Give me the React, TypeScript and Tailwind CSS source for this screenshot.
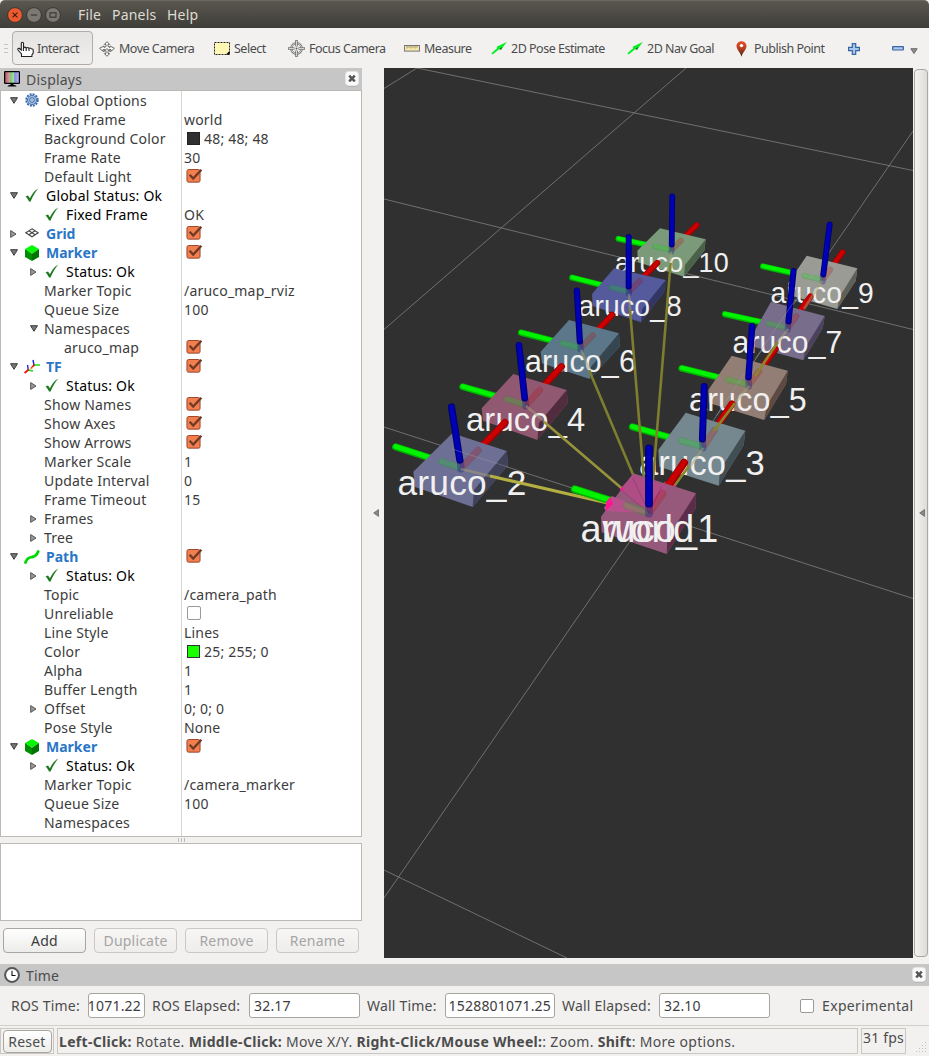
import React from "react";

type Pt = [number, number];

/* ---------- small icons ---------- */

const Check = () => (
  <svg width="15" height="15" viewBox="-1 0 15 15" className="block">
    <path d="M0.5 8.6 L3 7.4 L4.9 10.2 C7 6 9.5 2.8 13.2 0.6 C10 4.5 7.5 8.8 5.6 13.6 L4 13.6 C3 11.5 2 10 0.5 8.6Z" fill="#1e7a1e" />
  </svg>
);

const Gear = () => (
  <svg width="15" height="15" viewBox="-1 0 15 15" className="block">
    <circle cx="7" cy="7" r="5.7" fill="none" stroke="#3465a4" strokeWidth="2" strokeDasharray="1.9 1.08" />
    <circle cx="7" cy="7" r="4.6" fill="#9dbce0" stroke="#4a7ab8" strokeWidth="1" />
    <circle cx="7" cy="7" r="2.3" fill="#dbe7f4" stroke="#3465a4" strokeWidth="1" />
    <circle cx="7" cy="7" r="0.7" fill="#3465a4" />
  </svg>
);

const GridIcon = () => (
  <svg width="15" height="11" viewBox="-1 0 15 11" className="block" fill="none" stroke="#444" strokeWidth="1.1">
    <path d="M7 0.8 L13.2 4.8 L7 8.8 L0.8 4.8Z M3.9 2.8 L10.1 6.8 M10.1 2.8 L3.9 6.8" />
  </svg>
);

const Cube = () => (
  <svg width="16" height="16" viewBox="0 0 16 16" className="block">
    <path d="M8 0 L15 4 L8 8.8 L1 4Z" fill="#00fb00" />
    <path d="M1 4 L8 8.8 V16 L1 12Z" fill="#008e00" />
    <path d="M15 4 L8 8.8 V16 L15 12Z" fill="#007300" />
  </svg>
);

const TfIcon = () => (
  <svg width="17" height="15" viewBox="0 0 17 15" className="block" fill="none" strokeWidth="1.4">
    <path d="M10 6 L9 1 M4.2 11 L3.6 6" stroke="#2020e8" />
    <path d="M10 6 H16 M4.2 11 L9 12" stroke="#10e010" />
    <path d="M10.5 5.5 L7 9.5 M4.5 10.8 L0.6 14" stroke="#f01010" strokeWidth="1.8" />
    <path d="M9.3 8 L5 10.8" stroke="#e8b040" strokeWidth="1" />
  </svg>
);

const PathIcon = () => (
  <svg width="17" height="14" viewBox="0 0 17 14" className="block">
    <path d="M1.5 12.5 C3 8 5 7.6 8 7 C12 6.4 13 4.6 14.2 1.5" fill="none" stroke="#00d800" strokeWidth="2.8" strokeLinecap="round" />
  </svg>
);

const DownTri = () => (
  <svg width="8" height="7" viewBox="0 0 8 7" className="block">
    <path d="M0.5 0.7 H7.5 L4 6.3Z" fill="#777" stroke="#3c3c3c" strokeWidth="1" />
  </svg>
);

const MenuTri = () => (
  <svg width="8" height="7" viewBox="0 0 8 7" className="block">
    <path d="M0.8 0.7 H7.2 L4 5.6Z" fill="#8c8c8c" stroke="#6e6e6e" strokeWidth="1" />
  </svg>
);

const RightTri = () => (
  <svg width="7" height="8" viewBox="0 0 7 8" className="block">
    <path d="M0.7 0.6 V7.4 L6 4Z" fill="#999" stroke="#555" strokeWidth="1" />
  </svg>
);

const LeftTri = () => (
  <svg width="6" height="8" viewBox="0 0 6 8" className="block">
    <path d="M5.5 0.6 V7.4 L0.7 4Z" fill="#888" stroke="#666" strokeWidth="0.8" />
  </svg>
);

const Checked = () => (
  <svg width="17" height="16" viewBox="0 0 17 16" className="block">
    <rect x="0.5" y="1.5" width="14" height="13.6" rx="2" fill="#d9d4cf" />
    <rect x="1" y="1.5" width="13" height="12.6" rx="1.8" fill="#f37f4f" stroke="#a2492b" />
    <path d="M3.6 6.8 L7.2 10.6 L15.4 1.8" fill="none" stroke="#6e3a26" strokeWidth="2.3" />
  </svg>
);

const CloseBox = () => (
  <svg width="14" height="16" viewBox="0 0 14 16" className="block">
    <rect x="0.5" y="1" width="13" height="14.5" rx="3" fill="#aaa" />
    <rect x="0.5" y="0.5" width="13" height="14" rx="3" fill="#fafafa" stroke="#e4e4e4" />
    <path d="M4.2 4.7 L9.8 10.3 M9.8 4.7 L4.2 10.3" stroke="#555" strokeWidth="2.5" />
  </svg>
);

const Monitor = () => (
  <svg width="16" height="16" viewBox="0 0 16 16" className="block">
    <defs>
      <linearGradient id="scr" x1="0" x2="1" y1="0" y2="0">
        <stop offset="0" stopColor="#a85060" />
        <stop offset="0.33" stopColor="#dba0a0" />
        <stop offset="0.34" stopColor="#6fc070" />
        <stop offset="0.66" stopColor="#a8e8a8" />
        <stop offset="0.67" stopColor="#8888d8" />
        <stop offset="1" stopColor="#b8b8f8" />
      </linearGradient>
    </defs>
    <rect x="0.6" y="0.6" width="14.8" height="11.8" rx="0.6" fill="url(#scr)" stroke="#000" strokeWidth="1.2" />
    <path d="M6.5 12.5 H9.5 V14 H6.5Z" fill="#000" />
    <path d="M3.5 15.6 Q3.5 14 6 14 H10 Q12.5 14 12.5 15.6Z" fill="#000" />
  </svg>
);

const Clock = () => (
  <svg width="16" height="16" viewBox="0 0 16 16" className="block">
    <circle cx="8" cy="8" r="6.9" fill="#fff" stroke="#555" strokeWidth="2" />
    <path d="M8 3.8 V8.5 H11.6" fill="none" stroke="#111" strokeWidth="1.1" />
  </svg>
);

const Hand = () => (
  <svg width="17" height="17" viewBox="0 0 17 17" className="block" stroke="#222" strokeWidth="1.1">
    <path
      d="M4.5 15.5 V13 L1 9 Q0.3 7.6 2 7.2 L4.3 9 V2 Q5.4 0.4 6.5 2 V7 Q7.6 5.2 9.2 7 Q10.4 5.8 12 7.4 Q13.2 6.4 14.6 8 Q16.2 7.6 16.2 9.5 V12 L14.9 14 V15.5Z"
      fill="#fff"
    />
    <path d="M6.5 7 V10 M9.2 7 V10 M12 7.4 V10" fill="none" />
  </svg>
);

const MoveIcon = () => (
  <svg width="16" height="16" viewBox="0 0 16 16" className="block" fill="#fff" stroke="#666" strokeWidth="1">
    <path d="M8 0.7 L10.6 3.4 H9 V5.5 L11 6.5 V5 L15.4 7.3 L12.5 10 L12.2 8.8 L10.4 8.4 L9 9.6 V12.6 H10.6 L8 15.3 L5.4 12.6 H7 V9.6 L5.6 8.4 L3.8 8.8 L3.5 10 L0.6 7.3 L5 5 V6.5 L7 5.5 V3.4 H5.4Z" />
    <path d="M5.6 8.4 L4.5 11 L8 7.5 L11.5 11 L10.4 8.4" fill="none" />
  </svg>
);

const SelectIcon = () => (
  <svg width="16" height="13" viewBox="0 0 16 13" className="block">
    <rect x="0.5" y="0.5" width="15" height="12" fill="#fff7b4" stroke="#222" strokeDasharray="2 1" />
    <path d="M15.5 9 V12.5 H12Z" fill="#000" />
  </svg>
);

const FocusIcon = () => (
  <svg width="17" height="17" viewBox="0 0 17 17" className="block" fill="none" stroke="#777">
    <circle cx="8.5" cy="8.5" r="5.2" strokeWidth="2.4" />
    <circle cx="8.5" cy="8.5" r="5.2" stroke="#eee" strokeWidth="0.8" />
    <path d="M8.5 0 V6.5 M8.5 10.5 V17 M0 8.5 H6.5 M10.5 8.5 H17" strokeWidth="2.6" />
    <path d="M8.5 0.8 V6 M8.5 11 V16.2 M0.8 8.5 H6 M11 8.5 H16.2" stroke="#eee" strokeWidth="0.8" />
    <circle cx="8.5" cy="8.5" r="1" fill="#555" stroke="none" />
  </svg>
);

const Ruler = () => (
  <svg width="16" height="7" viewBox="0 0 16 7" className="block">
    <rect x="0.5" y="0.5" width="15" height="5.6" fill="#f5e9b0" stroke="#777" />
    <path d="M3 1 V3.5 M5 1 V2.8 M7 1 V3.5 M9 1 V2.8 M11 1 V3.5 M13 1 V2.8" stroke="#8a7a50" strokeWidth="0.8" />
  </svg>
);

const GreenArrow = () => (
  <svg width="16" height="13" viewBox="0 0 16 13" className="block">
    <path d="M0.4 11.2 L6.4 6 L5.6 4.8 L15.8 0 L10 7.8 L8.8 6.8 L1.6 12.4Z" fill="#00f020" />
    <path d="M8 6.9 L10 7.8 L11.5 5Z" fill="#086010" />
  </svg>
);

const Pin = () => (
  <svg width="11" height="16" viewBox="0 0 11 16" className="block">
    <defs>
      <linearGradient id="pin" x1="0" x2="0" y1="0" y2="1">
        <stop offset="0" stopColor="#e8502e" />
        <stop offset="0.5" stopColor="#b04020" />
        <stop offset="1" stopColor="#3a2010" />
      </linearGradient>
    </defs>
    <path d="M5.5 0.2 C8.6 0.2 10.5 2.4 10.5 5 C10.5 8.6 6.8 11 5.5 15.8 C4.2 11 0.5 8.6 0.5 5 C0.5 2.4 2.4 0.2 5.5 0.2Z" fill="url(#pin)" />
    <circle cx="5.5" cy="4.6" r="1.7" fill="#fff" />
  </svg>
);

const Plus = () => (
  <svg width="12" height="12" viewBox="0 0 12 12" className="block">
    <path d="M4.3 0.6 H7.7 V4.3 H11.4 V7.7 H7.7 V11.4 H4.3 V7.7 H0.6 V4.3 H4.3Z" fill="#a9c8ea" stroke="#3465a4" strokeWidth="1.2" />
  </svg>
);

const Minus = () => (
  <svg width="12" height="5" viewBox="0 0 12 5" className="block">
    <rect x="0.6" y="0.6" width="10.8" height="3.4" rx="0.5" fill="#a9c8ea" stroke="#3465a4" strokeWidth="1.2" />
  </svg>
);

/* ---------- property tree ---------- */

type Row = {
  l: 0 | 1 | 2;
  t: string;
  e?: "open" | "closed";
  i?: React.ReactNode;
  k?: "blue" | "black";
  v?: string;
  sw?: "dark" | "green";
  c?: boolean;
};

const status: Row = { l: 1, t: "Status: Ok", e: "closed", i: <Check />, k: "black" };

const rows: Row[] = [
  { l: 0, t: "Global Options", e: "open", i: <Gear /> },
  { l: 1, t: "Fixed Frame", v: "world" },
  { l: 1, t: "Background Color", v: "48; 48; 48", sw: "dark" },
  { l: 1, t: "Frame Rate", v: "30" },
  { l: 1, t: "Default Light", c: true },
  { l: 0, t: "Global Status: Ok", e: "open", i: <Check />, k: "black" },
  { l: 1, t: "Fixed Frame", i: <Check />, k: "black", v: "OK" },
  { l: 0, t: "Grid", e: "closed", i: <GridIcon />, k: "blue", c: true },
  { l: 0, t: "Marker", e: "open", i: <Cube />, k: "blue", c: true },
  status,
  { l: 1, t: "Marker Topic", v: "/aruco_map_rviz" },
  { l: 1, t: "Queue Size", v: "100" },
  { l: 1, t: "Namespaces", e: "open" },
  { l: 2, t: "aruco_map", c: true },
  { l: 0, t: "TF", e: "open", i: <TfIcon />, k: "blue", c: true },
  status,
  { l: 1, t: "Show Names", c: true },
  { l: 1, t: "Show Axes", c: true },
  { l: 1, t: "Show Arrows", c: true },
  { l: 1, t: "Marker Scale", v: "1" },
  { l: 1, t: "Update Interval", v: "0" },
  { l: 1, t: "Frame Timeout", v: "15" },
  { l: 1, t: "Frames", e: "closed" },
  { l: 1, t: "Tree", e: "closed" },
  { l: 0, t: "Path", e: "open", i: <PathIcon />, k: "blue", c: true },
  status,
  { l: 1, t: "Topic", v: "/camera_path" },
  { l: 1, t: "Unreliable", c: false },
  { l: 1, t: "Line Style", v: "Lines" },
  { l: 1, t: "Color", v: "25; 255; 0", sw: "green" },
  { l: 1, t: "Alpha", v: "1" },
  { l: 1, t: "Buffer Length", v: "1" },
  { l: 1, t: "Offset", e: "closed", v: "0; 0; 0" },
  { l: 1, t: "Pose Style", v: "None" },
  { l: 0, t: "Marker", e: "open", i: <Cube />, k: "blue", c: true },
  status,
  { l: 1, t: "Marker Topic", v: "/camera_marker" },
  { l: 1, t: "Queue Size", v: "100" },
  { l: 1, t: "Namespaces" },
];

const indent = ["pl-[4px]", "pl-[24px]", "pl-[44px]"];

function TreeRow({ r }: { r: Row }) {
  const tone =
    r.k === "blue"
      ? "font-bold text-[#2a76c6] tracking-[0px]"
      : r.k === "black"
        ? "text-black"
        : "text-[#3c3c3c]";
  return (
    <div className="flex h-[19px] shrink-0 items-center">
      <div className={`flex h-full w-[180px] shrink-0 items-center ${indent[r.l]}`}>
        <div className="mr-[3px] flex w-4 shrink-0 justify-center pl-[1px]">
          {r.e === "open" && <DownTri />}
          {r.e === "closed" && <RightTri />}
        </div>
        {r.i && <div className="flex w-[22px] shrink-0 items-center">{r.i}</div>}
        <span className={`whitespace-nowrap leading-[19px] ${tone}`}>{r.t}</span>
      </div>
      <div className="flex h-full flex-1 items-center pl-[3px] text-[#3c3c3c]">
        {r.sw && (
          <span
            className={`ml-[3px] mr-[4px] h-[13px] w-[13px] border ${
              r.sw === "dark" ? "border-[#222] bg-[#303030]" : "border-[#333] bg-[#19ff00]"
            }`}
          />
        )}
        {r.c === true && (
          <span className="mb-[2px] ml-[2px]">
            <Checked />
          </span>
        )}
        {r.c === false && (
          <span className="mb-[2px] ml-[3px] h-[14px] w-[14px] rounded-[2px] border border-[#999] bg-white" />
        )}
        {r.v && <span className="whitespace-nowrap leading-[19px]">{r.v}</span>}
      </div>
    </div>
  );
}

/* ---------- 3D scene ---------- */

type Frame = {
  name: string;
  top: [Pt, Pt, Pt, Pt];
  low: [Pt, Pt, Pt];
  fill: string;
  side: string;
  o: Pt;
  g: Pt;
  r: Pt;
  b: [Pt, Pt];
  w: number;
  label: [number, number, number, number];
};

/* top: back, right, front, left corners; low: left, front, right lower corners */
const frames: Frame[] = [
  { name: "aruco_10", top: [[660, 228.3], [705.7, 239.3], [685, 265], [637.3, 250.7]], low: [[638, 262.3], [684, 276.7], [704.3, 250.7]], fill: "#7a9a7a", side: "#4b6149", o: [671.3, 250], g: [616, 238.3], r: [698.5, 223.5], b: [[672.3, 194], [671.7, 247]], w: 5.8, label: [615, 272, 114, 28] },
  { name: "aruco_9", top: [[806.7, 255.7], [857.3, 268.3], [839.3, 297.3], [788.3, 283]], low: [[789, 295], [837.3, 309], [855.7, 280.7]], fill: "#999b94", side: "#5f605a", o: [822.7, 280], g: [760.5, 265.8], r: [844, 250.3], b: [[830, 222], [823, 277]], w: 6, label: [770.5, 303.3, 103.5, 28.8] },
  { name: "aruco_8", top: [[614, 268.3], [665.7, 280], [642.3, 309], [592, 294]], low: [[592.7, 306], [641, 322.3], [664, 292]], fill: "#545a9b", side: "#313665", o: [629, 292], g: [569.7, 277], r: [659, 261], b: [[628.7, 234.5], [628.7, 289]], w: 6, label: [578.5, 315.7, 103.5, 29] },
  { name: "aruco_7", top: [[771, 301.7], [824.7, 316], [805.7, 346.7], [752.3, 335]], low: [[753.3, 346.7], [803.3, 360.3], [822.7, 328.3]], fill: "#796d8c", side: "#4b425b", o: [787.7, 328], g: [722.4, 313.6], r: [812, 294.5], b: [[793.7, 268.5], [788.3, 324]], w: 6.2, label: [732.5, 353.3, 110, 31] },
  { name: "aruco_6", top: [[569, 320], [619, 333.3], [591, 366.7], [540.7, 351.7]], low: [[542, 363.3], [589.7, 379], [619.7, 346.7]], fill: "#5c7789", side: "#364650", o: [580.7, 348], g: [518.5, 332], r: [614, 313], b: [[576.7, 288], [580, 344]], w: 6.3, label: [525, 371.7, 111, 31] },
  { name: "aruco_5", top: [[731.7, 355.7], [787.7, 370.7], [766.7, 405.7], [708.3, 390]], low: [[709, 403], [764.3, 420], [786, 384]], fill: "#927e74", side: "#5c4a43", o: [749, 385], g: [679, 367.6], r: [777, 347], b: [[752.3, 323.5], [748.3, 380]], w: 6.5, label: [689, 410.7, 118, 33] },
  { name: "aruco_4", top: [[513.3, 374], [566.7, 390], [539, 423], [481.7, 408.3]], low: [[483, 420.7], [537.3, 440], [567.7, 403]], fill: "#915872", side: "#512c3e", o: [526, 405], g: [460, 386], r: [563.5, 364.5], b: [[518.7, 342.5], [525, 401]], w: 6.8, label: [466, 431, 119.5, 33.5] },
  { name: "aruco_3", top: [[685.7, 412.7], [745.3, 430.7], [720, 470], [658.3, 450]], low: [[659.3, 466.7], [718.7, 485.7], [743.7, 445]], fill: "#75888f", side: "#414e54", o: [703.3, 447], g: [629.5, 426], r: [733.5, 401.5], b: [[704.3, 383.5], [702.3, 442]], w: 7, label: [639, 474.5, 126, 35] },
  { name: "aruco_2", top: [[452.3, 433.3], [506.7, 451], [474, 490], [413.3, 471.7]], low: [[415, 487], [472.7, 507], [508, 465]], fill: "#6d6f94", side: "#3f4258", o: [461, 468], g: [392.8, 446], r: [507, 420.5], b: [[451, 404], [460.3, 463]], w: 7.2, label: [397.5, 495.3, 129, 35.5] },
  { name: "aruco_1", top: [[633.3, 473.3], [696, 493.3], [667.3, 538.3], [601, 516.7]], low: [[601.7, 532.3], [666.7, 554], [695.7, 508.3]], fill: "#96597c", side: "#5b2d48", o: [649, 513], g: [571.5, 488.2], r: [686, 460], b: [[649, 445], [649, 507]], w: 7.8, label: [580.5, 541.7, 138, 38.5] },
];

const pts = (a: Pt[]) => a.map((p) => p.join(",")).join(" ");

/* A capped rod that starts at a and ends at b, both ends included in its length. */
function Rod({ a, b, w, c, o = 1 }: { a: Pt; b: Pt; w: number; c: "r" | "g" | "b"; o?: number }) {
  const base = c === "r" ? "#a00000" : c === "g" ? "#00b400" : "#000078";
  const lit = c === "r" ? "#cc0000" : c === "g" ? "#00f400" : "#0000b6";
  const len = Math.hypot(b[0] - a[0], b[1] - a[1]) || 1;
  const k = Math.min(w * 0.42, len / 2) / len;
  const x1 = a[0] + (b[0] - a[0]) * k;
  const y1 = a[1] + (b[1] - a[1]) * k;
  const x2 = b[0] - (b[0] - a[0]) * k;
  const y2 = b[1] - (b[1] - a[1]) * k;
  return (
    <g opacity={o} strokeLinecap="round">
      <line x1={x1} y1={y1} x2={x2} y2={y2} stroke={base} strokeWidth={w} />
      <line x1={x1} y1={y1 - 0.4} x2={x2} y2={y2 - 0.4} stroke={lit} strokeWidth={w * 0.66} />
    </g>
  );
}

function Links() {
  return (
    <g fill="none" strokeWidth="2.6">
      <g stroke="#a5a070" opacity="0.5">
        <path d="M461 469 L490 476 M526 406 L544 421 M581 350 L589 369 M629 294 L630 310 M671 252 L670 264" />
        <path d="M822 281 L804 309 M788 329 L778 342 M749 386 L736 402 M703 448 L689 468" />
      </g>
      <path d="M490 476 L612 504" stroke="#b3af42" strokeWidth="3" />
      <path d="M544 421.7 L626 492" stroke="#96933a" />
      <path d="M589 370 L637 484" stroke="#7f7d2e" />
      <path d="M630 309 L644 480" stroke="#7f7d2e" />
      <path d="M670.6 263 L653 480" stroke="#7f7d2e" />
      <path d="M778 342 L755 376 M735 403 L714 431 M689 466 L672 489" stroke="#8a862e" />
    </g>
  );
}

function FrameMark({ f }: { f: Frame }) {
  const [back, right, front, left] = f.top;
  const [ll, lf, lr] = f.low;
  const last = f.name === "aruco_1";
  return (
    <g>
      <Rod a={f.g} b={f.o} w={f.w} c="g" />
      {last && <polygon points="664,482 674,481 675,487 667,492" fill="#ff1493" />}
      <Rod a={f.r} b={f.o} w={f.w} c="r" />
      <polygon points={pts([back, right, lr, lf, ll, left])} fill={f.fill} />
      <polygon points={pts([right, front, lf, lr])} fill={f.side} />
      {last && (
        <g>
          <polygon points="612,496 649,513 606,511 604,508" fill="#bb4f8e" />
          <polygon points="633,475 620,489 649,513 668,486" fill="#b04d86" />
          <path d="M620 489 L649 513 M633 478 L649 513 M662 486 L649 513" stroke="#8d4573" strokeWidth="1" fill="none" />
          <polygon points="610,497 606,502 606,511 613,504" fill="#ff1493" />
          <polygon points="622,486 620,491 624,490" fill="#ff1493" />
        </g>
      )}
      <Rod a={[(f.g[0] + f.o[0] * 2) / 3, (f.g[1] + f.o[1] * 2) / 3]} b={f.o} w={f.w} c="g" o={0.22} />
      <Rod a={[(f.r[0] + f.o[0] * 1.4) / 2.4, (f.r[1] + f.o[1] * 1.4) / 2.4]} b={f.o} w={f.w} c="r" o={0.22} />
      <Rod a={[f.b[1][0], f.b[1][1] - 4]} b={[f.o[0], f.o[1] + 4]} w={f.w} c="b" o={0.28} />
    </g>
  );
}

function Label({ f }: { f: Frame }) {
  const [x, y, w, s] = f.label;
  return (
    <text x={x} y={y} fontSize={s} textLength={w} lengthAdjust="spacingAndGlyphs" fill="#f0f0f0">
      {f.name}
    </text>
  );
}

function Scene() {
  const rear = frames.slice(0, 9);
  const first = frames[9];
  return (
    <svg width="529" height="890" viewBox="384 68 529 890" className="block bg-[#303030] font-['Liberation_Sans',sans-serif]">
      <g stroke="#808080" strokeWidth="0.8">
        <line x1="384" y1="88.5" x2="417" y2="68" />
        <line x1="417" y1="68" x2="913" y2="170.5" />
        <line x1="686" y1="68" x2="384" y2="329.5" />
        <line x1="384" y1="199" x2="913" y2="329.5" />
        <line x1="913" y1="131" x2="384" y2="898" />
        <line x1="384" y1="427" x2="913" y2="598.5" />
        <line x1="384" y1="870" x2="567" y2="958" />
      </g>
      {rear.map((f) => (
        <g key={f.name}>
          <FrameMark f={f} />
          <Label f={f} />
          <Rod a={f.b[0]} b={f.b[1]} w={f.w} c="b" />
        </g>
      ))}
      <Links />
      <g stroke="#a8a8a8" strokeWidth="0.6" opacity="0.6">
        <path d="M452 449 L508 467 M815 271 L755 359 M745 373 L716 416" />
      </g>
      <FrameMark f={first} />
      <Label f={first} />
      <text x="602.5" y="541.7" fontSize="38.5" textLength="92" lengthAdjust="spacingAndGlyphs" fill="#f0f0f0">
        world
      </text>
      <Rod a={first.b[0]} b={first.b[1]} w={first.w} c="b" />
    </svg>
  );
}

/* ---------- chrome ---------- */

function Tool({ icon, label, w, gap }: { icon: React.ReactNode; label?: string; w: string; gap?: string }) {
  return (
    <div className={`flex h-full shrink-0 items-center pt-[1px] ${w}`}>
      <span className={`shrink-0 ${gap ?? "w-[20px]"}`}>{icon}</span>
      {label && <span className="whitespace-nowrap pt-[1px]">{label}</span>}
    </div>
  );
}

function Field({ value, w, right }: { value: string; w: string; right?: boolean }) {
  return (
    <div
      className={`flex h-[25px] shrink-0 items-center overflow-hidden rounded-[3px] border border-[#a8a49e] bg-white ${w} ${
        right ? "justify-end pr-[3px]" : "pl-[4px]"
      }`}
    >
      <span className="whitespace-nowrap text-[#3c3c3c]">{value}</span>
    </div>
  );
}

function PushButton({ label, on }: { label: string; on?: boolean }) {
  return (
    <div
      className={`flex h-[25px] w-[83px] items-center justify-center rounded-[4px] border bg-linear-to-b ${
        on
          ? "border-[#a9a5a0] from-white to-[#ececea] text-[#3c3c3c]"
          : "border-[#cbc8c4] from-[#f7f6f5] to-[#eeedeb] text-[#a5a5a5]"
      }`}
    >
      {label}
    </div>
  );
}

const WinButton = ({ red, children }: { red?: boolean; children: React.ReactNode }) => (
  <svg width="16" height="16" viewBox="0 0 16 16" className="block">
    <circle cx="8" cy="8" r="7.4" fill={red ? "#ec5b30" : "#7b7971"} stroke="#35332d" strokeWidth="0.9" />
    <g fill="none" stroke={red ? "#4a1c0c" : "#3a3933"} strokeWidth="1.2">
      {children}
    </g>
  </svg>
);

export default function App() {
  return (
    <div className="flex h-[1056px] w-[929px] flex-col overflow-hidden bg-[#f2f1f0] font-['Noto_Sans',sans-serif] text-[14px] tracking-[0.2px] text-[#4c4c4c]">
      <header className="flex h-[28px] shrink-0 items-center rounded-t-[5px] border-t border-[#6b685f] bg-linear-to-b from-[#5a5750] to-[#3e3d38] pl-[7px] text-[#dfdbd2]">
        <div className="flex gap-[3px]">
          <WinButton red>
            <path d="M5.6 5.6 L10.4 10.4 M10.4 5.6 L5.6 10.4" />
          </WinButton>
          <WinButton>
            <path d="M4.8 8 H11.2" />
          </WinButton>
          <WinButton>
            <rect x="5" y="5.8" width="6" height="4.4" />
          </WinButton>
        </div>
        <span className="ml-[17px] w-[34px]">File</span>
        <span className="w-[55px]">Panels</span>
        <span>Help</span>
      </header>

      <div className="flex h-[40px] shrink-0 items-center text-[12.5px] tracking-[-0.5px]">
        <div className="ml-[4px] flex w-[8px] shrink-0 flex-col gap-[3px]">
          <span className="h-px w-[4px] bg-[#c8c5c1]" />
          <span className="h-px w-[4px] bg-[#c8c5c1]" />
          <span className="h-px w-[4px] bg-[#c8c5c1]" />
        </div>
        <div className="mr-[6px] flex h-[34px] w-[81px] shrink-0 items-center rounded-[4px] border border-[#b0aca7] bg-linear-to-b from-[#e4e3e1] to-[#f0efed] pl-[4px] pt-[2px]">
          <span className="w-[20px] shrink-0">
            <Hand />
          </span>
          <span className="pt-[1px]">Interact</span>
        </div>
        <Tool icon={<MoveIcon />} label="Move Camera" w="w-[115px]" />
        <Tool icon={<SelectIcon />} label="Select" w="w-[74px]" />
        <Tool icon={<FocusIcon />} label="Focus Camera" w="w-[116px]" gap="w-[21px]" />
        <Tool icon={<Ruler />} label="Measure" w="w-[87px]" />
        <Tool icon={<GreenArrow />} label="2D Pose Estimate" w="w-[136px]" />
        <Tool icon={<GreenArrow />} label="2D Nav Goal" w="w-[109px]" />
        <Tool icon={<Pin />} label="Publish Point" w="w-[112px]" gap="w-[18px]" />
        <Tool icon={<Plus />} w="w-[44px]" />
        <Tool icon={<Minus />} w="w-[18px]" />
        <div className="mt-[6px]">
          <MenuTri />
        </div>
      </div>

      <div className="flex h-[890px] shrink-0">
        <section className="flex w-[362px] shrink-0 flex-col">
          <div className="flex h-[22px] shrink-0 items-center bg-[#c6c6c6] pl-[4px] pr-[3px]">
            <Monitor />
            <span className="ml-[6px] flex-1">Displays</span>
            <CloseBox />
          </div>
          <div className="relative h-[747px] shrink-0 border border-[#bcb8b4] bg-white">
            <div className="absolute left-[180px] top-0 h-full w-px bg-[#d8d6d3]" />
            {rows.map((r, n) => (
              <TreeRow key={n} r={r} />
            ))}
          </div>
          <div className="flex h-[6px] shrink-0 items-center justify-center gap-[2px]">
            <span className="h-[4px] w-px bg-[#bbb]" />
            <span className="h-[4px] w-px bg-[#bbb]" />
            <span className="h-[4px] w-px bg-[#bbb]" />
          </div>
          <div className="h-[78px] shrink-0 border border-[#bcb8b4] bg-white" />
          <div className="mt-[7px] flex justify-between pl-[3px] pr-[3px]">
            <PushButton label="Add" on />
            <PushButton label="Duplicate" />
            <PushButton label="Remove" />
            <PushButton label="Rename" />
          </div>
        </section>
        <div className="flex w-[22px] shrink-0 items-center justify-end pr-[5px]">
          <LeftTri />
        </div>
        <Scene />
        <div className="flex w-[16px] shrink-0 pb-[1px] pl-[1px] pt-[1px]">
          <div className="flex w-[14px] items-center justify-center rounded-[4px] border border-[#aaa6a1] bg-linear-to-r from-[#f4f3f2] to-[#dedcd9] pl-[2px]">
            <LeftTri />
          </div>
        </div>
      </div>

      <div className="mt-[6px] flex h-[22px] shrink-0 items-center bg-[#c6c6c6] pl-[4px] pr-[3px]">
        <Clock />
        <span className="ml-[6px] flex-1">Time</span>
        <CloseBox />
      </div>

      <div className="flex h-[40px] shrink-0 items-center border-b border-[#d2cfcc] pl-[11px]">
        <span className="w-[77px] shrink-0 whitespace-nowrap">ROS Time:</span>
        <Field value="1071.22" w="w-[57px]" right />
        <span className="ml-[7px] w-[97px] shrink-0 whitespace-nowrap">ROS Elapsed:</span>
        <Field value="32.17" w="w-[111px]" />
        <span className="ml-[7px] w-[78px] shrink-0 whitespace-nowrap">Wall Time:</span>
        <Field value="1528801071.25" w="w-[110px]" right />
        <span className="ml-[7px] w-[97px] shrink-0 whitespace-nowrap">Wall Elapsed:</span>
        <Field value="32.10" w="w-[111px]" />
        <span className="ml-[30px] h-[14px] w-[14px] shrink-0 rounded-[2px] border border-[#999] bg-white" />
        <span className="ml-[8px] tracking-[0.35px]">Experimental</span>
      </div>

      <div className="flex h-[30px] shrink-0 pt-[2px]">
        <div className="flex h-[26px] w-[54px] shrink-0 items-center justify-center border border-[#cbc8c4]">
          <div className="flex h-[23px] w-[49px] items-center justify-center rounded-[4px] border border-[#a9a5a0] bg-linear-to-b from-white to-[#ececea]">
            Reset
          </div>
        </div>
        <div className="ml-[3px] flex h-[26px] w-[801px] shrink-0 items-center overflow-hidden whitespace-nowrap border border-[#cbc8c4] pl-[1px] tracking-[0.31px]">
          <span>
            <b>Left-Click:</b> Rotate. <b>Middle-Click:</b> Move X/Y. <b>Right-Click/Mouse Wheel:</b>: Zoom. <b>Shift</b>: More options.
          </span>
        </div>
        <div className="ml-[3px] h-[26px] w-[45px] shrink-0 whitespace-nowrap border border-[#cbc8c4] pl-[1px] leading-[18px]">31 fps</div>
        <div className="flex flex-1 items-end justify-end pb-[3px] pr-[2px]">
          <svg width="12" height="12" viewBox="0 0 12 12" fill="#c4c1bd">
            <path d="M10 1h1v1h-1z M7 4h1v1h-1z M10 4h1v1h-1z M4 7h1v1h-1z M7 7h1v1h-1z M10 7h1v1h-1z M1 10h1v1h-1z M4 10h1v1h-1z M7 10h1v1h-1z M10 10h1v1h-1z" />
          </svg>
        </div>
      </div>
    </div>
  );
}
